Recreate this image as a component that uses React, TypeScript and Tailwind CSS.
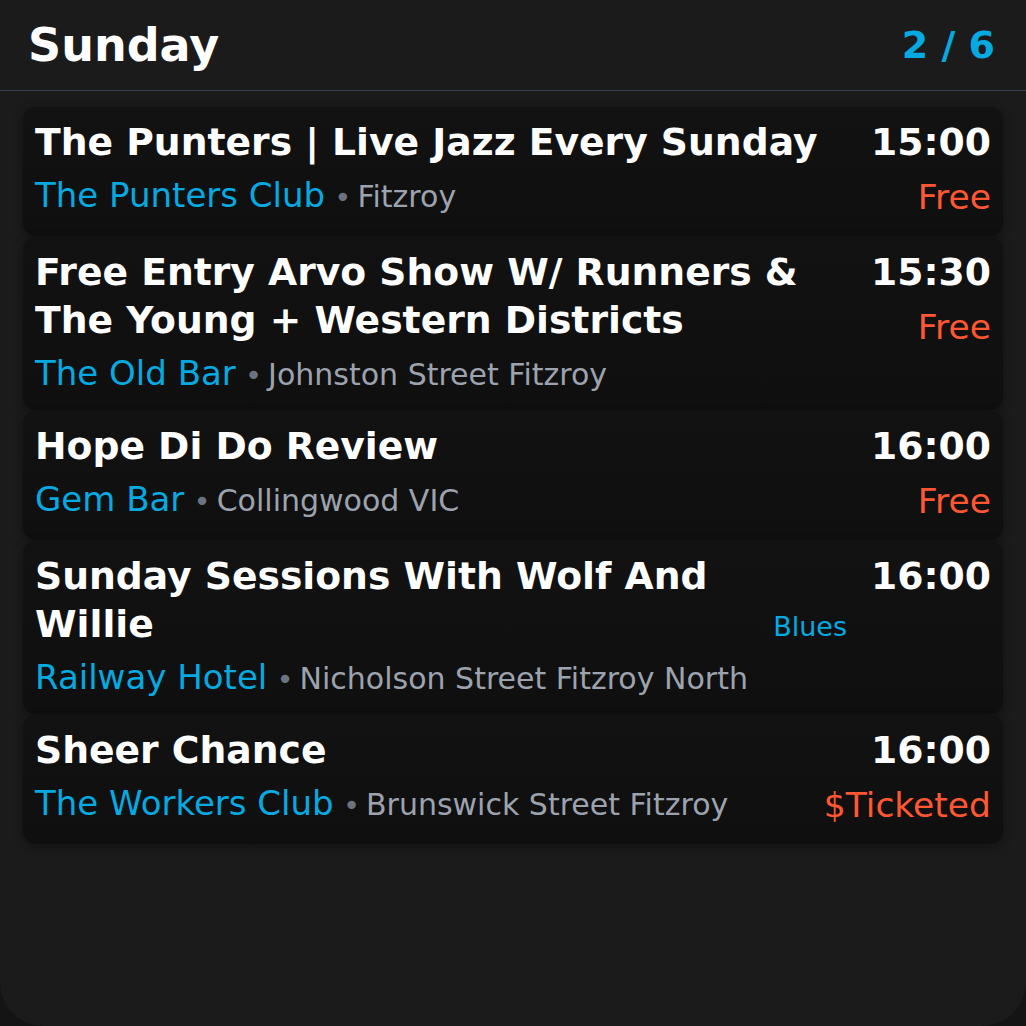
type Gig = {
  title: string
  venue: string
  place: string
  time: string
  price?: string
  genre?: string
}

const gigs: Gig[] = [
  { title: "The Punters | Live Jazz Every Sunday", venue: "The Punters Club", place: "Fitzroy", time: "15:00", price: "Free" },
  {
    title: "Free Entry Arvo Show W/ Runners & The Young + Western Districts",
    venue: "The Old Bar",
    place: "Johnston Street Fitzroy",
    time: "15:30",
    price: "Free",
  },
  { title: "Hope Di Do Review", venue: "Gem Bar", place: "Collingwood VIC", time: "16:00", price: "Free" },
  {
    title: "Sunday Sessions With Wolf And Willie",
    venue: "Railway Hotel",
    place: "Nicholson Street Fitzroy North",
    time: "16:00",
    genre: "Blues",
  },
  { title: "Sheer Chance", venue: "The Workers Club", place: "Brunswick Street Fitzroy", time: "16:00", price: "$Ticketed" },
]

function GigCard({ gig }: { gig: Gig }) {
  return (
    <div className="flex gap-6 rounded-xl bg-gradient-to-b from-[#121212] to-[#0f0f0f] px-3 py-[11px] shadow-[0_2px_10px_rgba(0,0,0,0.35)]">
      <div className="min-w-0 flex-1">
        <h3 className="text-[37.7px] font-bold leading-[48px] text-white">{gig.title}</h3>
        <p className="mt-1 text-[34px] leading-[1.5] text-[#06a9e0]">
          {gig.venue}
          <span className="text-[29px] text-[#6b7280]"> •</span>
          <span className="ml-[6px] text-[30px] text-[#9ca3af]">{gig.place}</span>
        </p>
      </div>
      {gig.genre && <span className="shrink-0 self-center text-[27px] text-[#06a9e0]">{gig.genre}</span>}
      <div className="shrink-0 text-right">
        <div className="text-[37.7px] font-bold leading-[48px] text-white">{gig.time}</div>
        {gig.price && <div className="mt-1 text-[34.5px] leading-[55px] text-[#ff5733]">{gig.price}</div>}
      </div>
    </div>
  )
}

export default function App() {
  return (
    <div className="h-[1026px] w-[1026px] bg-[#141414] font-['DejaVu_Sans',sans-serif]">
      <div className="h-full overflow-hidden rounded-b-[44px] bg-[#1b1b1b]">
        <header className="flex h-[91px] items-center justify-between border-b border-[#374151] pl-7 pr-[31px]">
          <h1 className="text-[46px] font-bold text-white">Sunday</h1>
          <span className="text-[38px] font-bold text-[#06a9e0]">2 / 6</span>
        </header>
        <main className="flex flex-col gap-px px-[23px] pt-4">
          {gigs.map((gig) => (
            <GigCard key={gig.title} gig={gig} />
          ))}
        </main>
      </div>
    </div>
  )
}
